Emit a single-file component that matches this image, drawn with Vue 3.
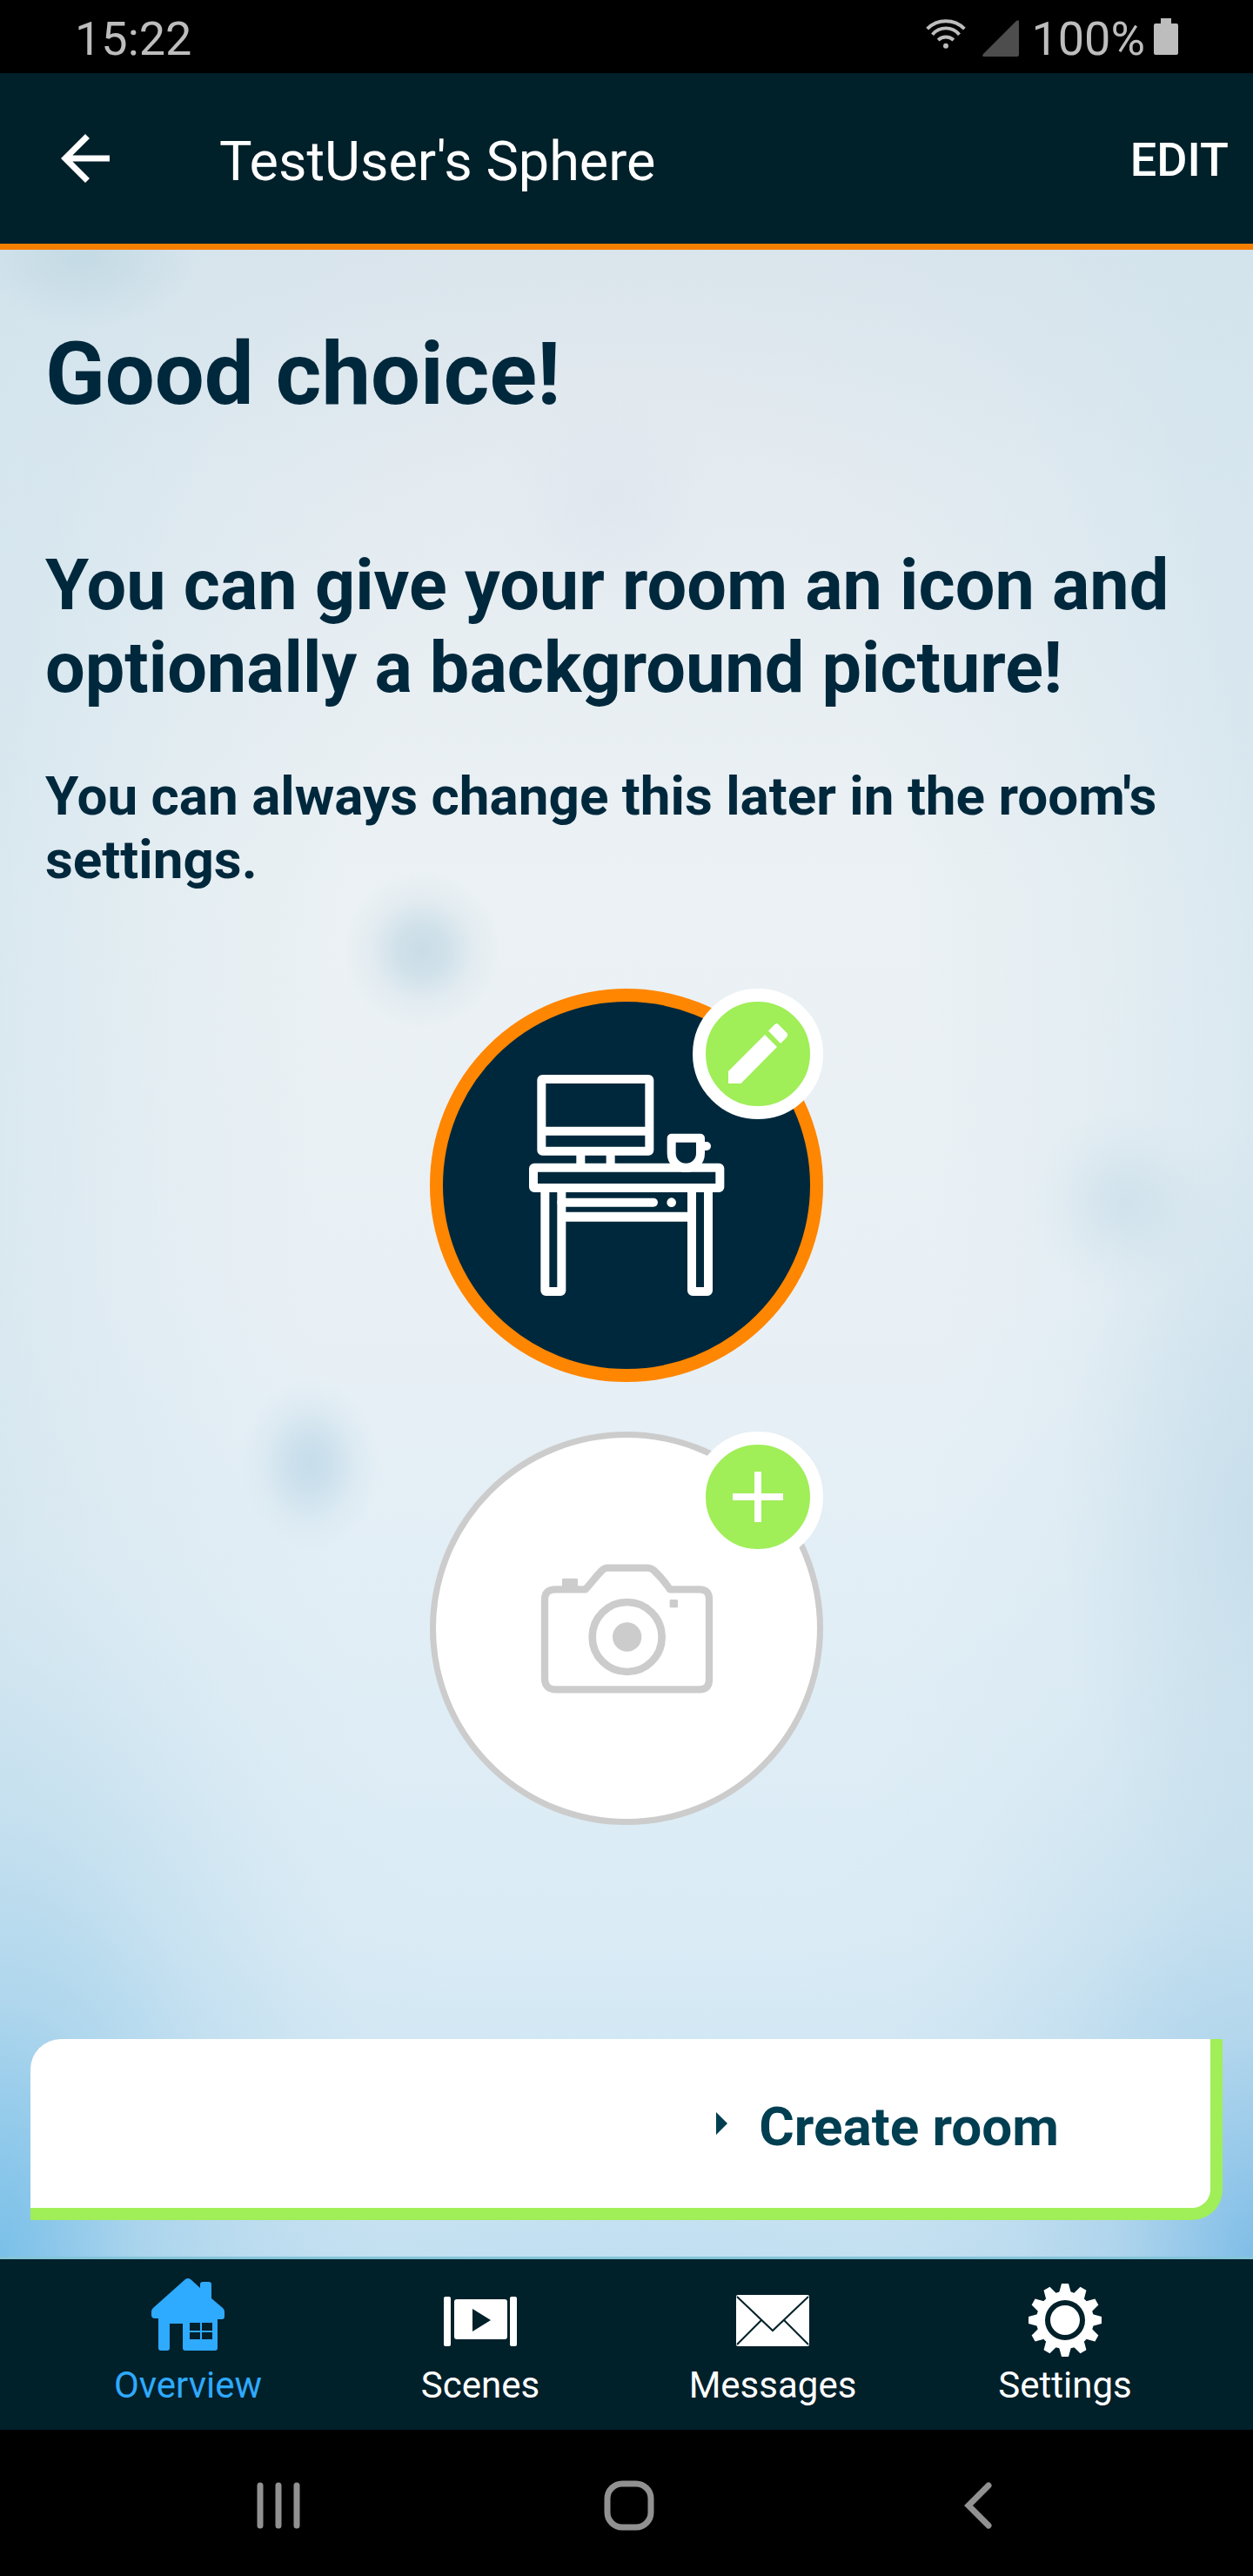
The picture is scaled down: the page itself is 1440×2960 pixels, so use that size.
<script setup>
const tabs = [
  { id: 'overview', label: 'Overview', active: true },
  { id: 'scenes', label: 'Scenes', active: false },
  { id: 'messages', label: 'Messages', active: false },
  { id: 'settings', label: 'Settings', active: false },
]
const teeth = Array.from({ length: 12 }, (_, i) => i * 30)
</script>

<template>
  <div class="screen">
    <div class="status">
      <span class="clock">15:22</span>
      <div class="indicators">
        <svg class="wifi" viewBox="66 62 146 108" fill="none" stroke="#bdbdbd" stroke-width="12">
          <path d="M74 98A92 92 0 0 1 204 98M92 118A61 61 0 0 1 186 118M112 137A41 41 0 0 1 166 137" />
          <circle cx="139" cy="158" r="9" fill="#bdbdbd" stroke="none" />
        </svg>
        <svg class="signal" viewBox="0 0 42 42" fill="#4d4d4d">
          <path d="M39 1Q42-1 42 2V40Q42 42 40 42H2Q-1 42 1 39Z" />
        </svg>
        <span class="charge">100%</span>
        <svg class="battery" viewBox="0 0 28 42" fill="#bdbdbd">
          <path d="M8 0H20V6H26Q28 6 28 8V40Q28 42 26 42H2Q0 42 0 40V8Q0 6 2 6H8Z" />
        </svg>
      </div>
    </div>

    <header class="header">
      <button class="back" type="button" aria-label="Back">
        <svg viewBox="0 0 56 56" fill="#fff">
          <path d="M56 24.500H13.400L33 4.900 28 0 0 28 28 56 33 51.100 13.400 31.500H56Z" />
        </svg>
      </button>
      <span class="title">TestUser's Sphere</span>
      <button class="edit" type="button">EDIT</button>
    </header>

    <main class="content">
      <h1>Good choice!</h1>
      <h2>You can give your room an icon and optionally a background picture!</h2>
      <p>You can always change this later in the room's settings.</p>

      <div class="pickers">
        <button class="picker icon-picker" type="button" aria-label="Choose icon">
          <svg class="desk" viewBox="378 341 684 768" fill="none" stroke="#fff" stroke-width="30">
            <rect x="427" y="359" width="372" height="248" rx="3" />
            <path d="M427 538H799M562 607V664M665 607V664" />
            <rect x="399" y="664" width="643" height="70" rx="3" />
            <rect x="439" y="734" width="57" height="357" rx="3" />
            <rect x="945" y="734" width="57" height="357" rx="3" />
            <path d="M496 834H945" stroke-width="33" />
            <path d="M496 784H813" stroke-linecap="round" />
            <circle cx="875" cy="784" r="16" fill="#fff" stroke="none" />
            <path d="M875 562H975V615A50 50 0 0 1 875 615Z" stroke-linejoin="round" />
            <path d="M985 590H996" stroke-linecap="round" />
          </svg>
          <span class="badge">
            <svg viewBox="0 0 120 120" fill="#fff">
              <path d="M26 80L68 38 82 52 40.500 94H26Z" />
              <path d="M72 33.500L79 26.500Q81.500 23.500 84 26.500L93 35.500Q95.500 38 93 41L86 48Z" />
            </svg>
          </span>
        </button>

        <button class="picker photo-picker" type="button" aria-label="Add picture">
          <svg class="camera" viewBox="420 498 600 450" fill="none" stroke="#ccc" stroke-width="25">
            <path d="M438 625Q438 589 475 589H578C593 574 606 554 634 525Q644 515 654 515H794Q804 515 814 523C840 547 855 567 870 589H972Q1005 589 1005 622V900Q1005 934 972 934H477Q438 934 438 895Z" stroke-linejoin="round" />
            <circle cx="722" cy="753" r="120" stroke-width="26" />
            <circle cx="722" cy="753" r="50" fill="#ccc" stroke="none" />
            <rect x="498" y="551" width="54" height="34" rx="4" fill="#ccc" stroke="none" />
            <rect x="869" y="624" width="28" height="28" rx="4" fill="#ccc" stroke="none" />
          </svg>
          <span class="badge">
            <svg viewBox="0 0 120 120" fill="#fff">
              <path d="M56 31H64V56H89V64H64V89H56V64H31V56H56Z" />
            </svg>
          </span>
        </button>
      </div>

      <button class="create" type="button">
        <svg viewBox="0 0 13 26" fill="#003e52"><path d="M0 0L13 13 0 26Z" /></svg>
        <span>Create room</span>
      </button>
    </main>

    <nav class="tabs">
      <a v-for="tab in tabs" :key="tab.id" href="#" class="tab" :class="{ active: tab.active }">
        <svg v-if="tab.id === 'overview'" viewBox="0 6 84 96" fill="currentColor">
          <path fill-rule="evenodd" d="M39 1Q42-1 45 1L56 11V7Q56 4 59 4H66Q69 4 69 7V23L82 34Q84 36 84 38V44Q84 47 81 47H76V80Q76 83 73 83H39Q36 83 36 80V52H21V80Q21 83 18 83H11Q8 83 8 80V46H4Q0 46 0 42V38Q0 36 2 34ZM44 51V60H56V51ZM58 51V60H70V51ZM44 62V70H56V62ZM58 62V70H70V62Z" />
        </svg>
        <svg v-else-if="tab.id === 'scenes'" viewBox="0 -21 84 96" fill="currentColor">
          <rect y="-6" width="8" height="57" rx="2" />
          <rect x="76" y="-6" width="8" height="57" rx="2" />
          <path fill-rule="evenodd" d="M15-3H70Q73-3 73 0V40Q73 43 70 43H15Q12 43 12 40V0Q12-3 15-3ZM33 8V34L54 21Z" />
        </svg>
        <svg v-else-if="tab.id === 'messages'" viewBox="0 -13 84 96" fill="currentColor">
          <rect width="84" height="59" rx="2" />
          <path d="M1 2L42 41 83 2M1 57L29 29M83 57L55 29" fill="none" stroke="#00202a" stroke-width="2" />
        </svg>
        <svg v-else viewBox="0 0 84 96" fill="currentColor">
          <g transform="translate(42 42)">
            <path v-for="a in teeth" :key="a" d="M-7-31L-4-42H4L7-31Z" :transform="`rotate(${a})`" />
            <circle r="28" fill="none" stroke="currentColor" stroke-width="10" />
            <circle r="17" />
          </g>
        </svg>
        <span>{{ tab.label }}</span>
      </a>
    </nav>

    <div class="system">
      <button type="button" aria-label="Recent apps">
        <svg viewBox="0 0 60 60" stroke="#919191" stroke-width="7" stroke-linecap="round">
          <path d="M9 7V53M30 7V53M51 7V53" />
        </svg>
      </button>
      <button type="button" aria-label="Home">
        <svg viewBox="0 0 60 60" fill="none" stroke="#919191" stroke-width="7">
          <rect x="5" y="5" width="50" height="50" rx="17" />
        </svg>
      </button>
      <button type="button" aria-label="Back">
        <svg viewBox="0 0 60 60" fill="none" stroke="#919191" stroke-width="7" stroke-linecap="round">
          <path d="M40 7L17 30 40 53" />
        </svg>
      </button>
    </div>
  </div>
</template>

<style>
body {
  margin: 0;
  background: #000;
}
</style>

<style scoped>
.screen {
  display: flex;
  flex-direction: column;
  min-height: 100vh;
  font-family: Roboto, "Liberation Sans", sans-serif;
  color: #00283c;
}
button {
  padding: 0;
  border: 0;
  background: none;
  font-family: inherit;
  color: inherit;
}
svg {
  display: block;
}
.status {
  box-sizing: border-box;
  display: flex;
  justify-content: space-between;
  height: 84px;
  padding: 21px 86px 0;
  background: #000;
  color: #bdbdbd;
  font-size: 54px;
  line-height: 48px;
}
.indicators {
  display: flex;
  align-items: flex-start;
}
.wifi {
  width: 48px;
  height: 36px;
  margin-right: 18px;
}
.signal {
  width: 42px;
  height: 42px;
  margin: 2px 14px 0 0;
}
.battery {
  width: 28px;
  height: 42px;
  margin-left: 10px;
}
.header {
  display: flex;
  align-items: center;
  height: 196px;
  padding: 0 28px 0 70px;
  border-bottom: 7px solid #f57e00;
  background: #00202a;
  color: #fff;
}
.back svg {
  width: 56px;
  height: 56px;
}
.title {
  flex: 1;
  margin-left: 126px;
  padding-top: 7px;
  font-size: 63px;
  line-height: 74px;
}
.edit {
  padding-top: 4px;
  font-size: 54px;
  font-weight: 500;
  line-height: 64px;
}
.content {
  flex: 1;
  display: flex;
  flex-direction: column;
  padding: 83px 35px 42px;
  background:
    radial-gradient(circle 90px at 485px 805px, #c2d8e4d0 0%, #c2d8e4a8 30%, #c2d8e430 68%, #c2d8e400 100%),
    radial-gradient(ellipse 80px 100px at 357px 1395px, #bfd9e8d0 0%, #bfd9e8a0 30%, #bfd9e830 68%, #bfd9e800 100%),
    radial-gradient(circle 110px at 1295px 1095px, #c6dce8a0 0%, #c6dce870 30%, #c6dce824 68%, #c6dce800 100%),
    radial-gradient(ellipse 130px 80px at 95px 10px, #bdd6e0b0 0%, #bdd6e060 45%, #bdd6e000 100%),
    radial-gradient(circle 130px at 700px 285px, #dde4eeb0 0%, #dde4ee60 50%, #dde4ee00 100%),
    radial-gradient(ellipse 220px 460px at 100% 1460px, #b4d3e570 0%, #b4d3e538 50%, #b4d3e500 100%),
    radial-gradient(ellipse 440px 820px at 0 100%, #6fbbe8e0 0%, #6fbbe8a0 18%, #6fbbe858 36%, #6fbbe824 62%, #6fbbe80a 85%, #6fbbe800 100%),
    radial-gradient(ellipse 440px 720px at 100% 100%, #72b7e6d8 0%, #72b7e690 18%, #72b7e64c 36%, #72b7e61c 62%, #72b7e608 85%, #72b7e600 100%),
    radial-gradient(ellipse 900px 2400px at 50% 50%, #cfe3ed00 0%, #cfe3ed00 40%, #cfe3ed50 65%, #cfe3eda0 82%, #cfe3edb0 100%),
    linear-gradient(#dce5ec 0%, #e5ecf1 12%, #ebf1f4 32%, #e9f0f5 52%, #e1eef6 68%, #daebf5 84%, #cde5f4 93%, #c0dff2 100%);
}
h1,
h2,
p {
  margin: 0 17px;
  font-weight: 700;
}
h1 {
  font-size: 101px;
  line-height: 120px;
}
h2 {
  margin-top: 135px;
  font-size: 81px;
  line-height: 95px;
}
p {
  margin-top: 63px;
  font-size: 62px;
  line-height: 73px;
}
.pickers {
  display: flex;
  flex-direction: column;
  align-items: center;
  gap: 57px;
  margin-top: 112px;
}
.picker {
  position: relative;
  display: flex;
  align-items: center;
  justify-content: center;
  box-sizing: border-box;
  width: 452px;
  height: 452px;
  border-radius: 50%;
}
.icon-picker {
  border: 15px solid #ff8600;
  background: #00283c;
}
.photo-picker {
  border: 7px solid #ccc;
  background: #fff;
}
.desk {
  width: 228px;
  height: 256px;
}
.camera {
  width: 200px;
  height: 150px;
}
.badge {
  position: absolute;
  top: -15px;
  right: -15px;
  border: 15px solid #fff;
  border-radius: 50%;
  background: #a0ee58;
}
.photo-picker .badge {
  top: -7px;
  right: -7px;
}
.badge svg {
  width: 120px;
  height: 120px;
}
.create {
  display: flex;
  align-items: center;
  justify-content: flex-end;
  gap: 36px;
  height: 208px;
  margin-top: auto;
  padding-right: 174px;
  border: solid #a0ee58;
  border-width: 0 14px 14px 0;
  border-radius: 35px 0;
  background: #fff;
  color: #003e52;
  font-size: 62px;
  font-weight: 700;
  line-height: 74px;
}
.create span {
  padding-top: 7px;
}
.create svg {
  width: 13px;
  height: 26px;
}
.tabs {
  display: flex;
  height: 196px;
  padding: 0 48px;
  border-top: 3px solid #84c5d9;
  background: #00202a;
}
.tab {
  flex: 1;
  display: flex;
  flex-direction: column;
  align-items: center;
  padding-top: 28px;
  color: #fff;
  font-size: 42px;
  line-height: 48px;
  text-decoration: none;
}
.tab svg {
  width: 84px;
  height: 96px;
  overflow: visible;
}
.tab span {
  margin-top: -3px;
}
.active {
  color: #2eaaff;
}
.system {
  display: flex;
  justify-content: space-between;
  padding: 57px 284px 51px 290px;
  background: #000;
}
.system svg {
  width: 60px;
  height: 60px;
}
</style>
